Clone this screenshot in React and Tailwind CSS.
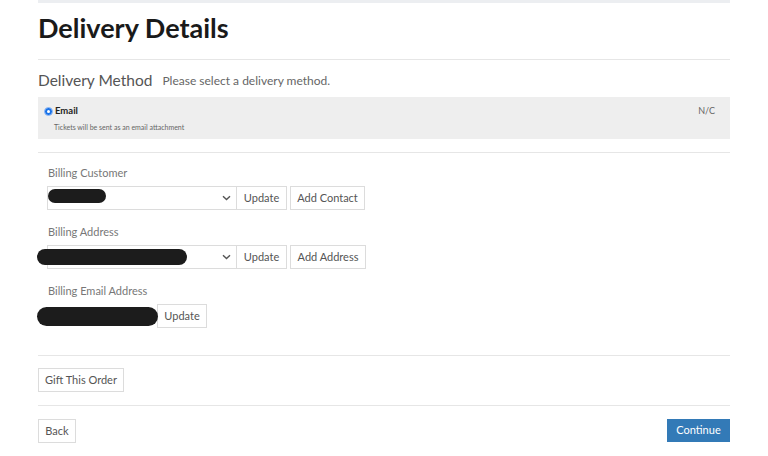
import React from "react";

const btn = "h-[24px] border border-[#dcdcdc] bg-white text-[11px] text-[#555] whitespace-nowrap flex items-center justify-center";

function Blob({ className }) {
	// redaction mark drawn over the field
	return <div className={"absolute bg-[#1c1c1c] rounded-full " + className}></div>;
}

function Chevron() {
	return (
		<svg width="9" height="6" viewBox="0 0 9 6" className="text-[#555]">
			<path d="M1 1.2 L4.5 4.6 L8 1.2" fill="none" stroke="currentColor" strokeWidth="1.4" />
		</svg>
	);
}

const App = () => {
	return (
		<div className="w-[768px] h-[456px] bg-white font-['Lato',sans-serif] overflow-hidden">
			<div className="ml-[38px] w-[692px]">
				<div className="h-[3px] bg-[#eceef1]"></div>

				<div className="h-[56px] pt-[8px]">
					<div className="text-[27px] leading-[34px] font-bold text-[#1a1a1a]">Delivery Details</div>
				</div>

				<div className="border-t border-[#e6e6e6]"></div>

				<div className="h-[37px] flex items-center pt-[4px] gap-[10px]">
					<span className="text-[15.5px] text-[#555]">Delivery Method</span>
					<span className="text-[12px] text-[#666] pt-[1px]">Please select a delivery method.</span>
				</div>

				<div className="h-[42px] bg-[#eeeeee] flex justify-between pl-[6px] pr-[15px] pt-[8px]">
					<div>
						<div className="flex items-center gap-[2px] h-[12px]">
							<div className="w-[9px] h-[9px] rounded-full bg-[#1a73e8] border border-[#9cc0f5] flex items-center justify-center">
								<div className="w-[3px] h-[3px] rounded-full bg-white"></div>
							</div>
							<span className="text-[9.5px] font-bold text-[#222]">Email</span>
						</div>
						<div className="text-[7px] text-[#666] pl-[10px] mt-[5px]">Tickets will be sent as an email attachment</div>
					</div>
					<div className="text-[9px] text-[#666] h-[12px] flex items-center">N/C</div>
				</div>

				<div className="h-[13px]"></div>
				<div className="border-t border-[#e6e6e6]"></div>

				<div className="pl-[9px] pt-[13px]">
					<div className="text-[11px] leading-[14px] text-[#777] pl-[1px]">Billing Customer</div>
					<div className="flex mt-[6px] gap-[3px]">
						<div className="flex">
							<div className="relative w-[190px] h-[24px] border border-[#dcdcdc] bg-white flex items-center justify-end pr-[5px]">
								<Blob className="left-[0px] top-[2px] w-[58px] h-[14px]" />
								<Chevron />
							</div>
							<div className={btn + " w-[50px] border-l-0"}>Update</div>
						</div>
						<div className={btn + " w-[75px]"}>Add Contact</div>
					</div>

					<div className="text-[11px] leading-[14px] text-[#777] pl-[1px] mt-[15px]">Billing Address</div>
					<div className="flex mt-[6px] gap-[3px]">
						<div className="flex">
							<div className="relative w-[190px] h-[24px] border border-[#dcdcdc] bg-white flex items-center justify-end pr-[5px]">
								<Blob className="left-[-11px] top-[3px] w-[150px] h-[16px]" />
								<Chevron />
							</div>
							<div className={btn + " w-[50px] border-l-0"}>Update</div>
						</div>
						<div className={btn + " w-[76px]"}>Add Address</div>
					</div>

					<div className="text-[11px] leading-[14px] text-[#777] pl-[1px] mt-[15px]">Billing Email Address</div>
					<div className="flex mt-[6px]">
						<div className="relative w-[110px] h-[24px]">
							<Blob className="left-[-10px] top-[3px] w-[121px] h-[19px]" />
						</div>
						<div className={btn + " w-[50px]"}>Update</div>
					</div>
				</div>

				<div className="h-[27px]"></div>
				<div className="border-t border-[#e6e6e6]"></div>

				<div className="pt-[12px] pb-[13px]">
					<div className={btn + " w-[86px]"}>Gift This Order</div>
				</div>

				<div className="border-t border-[#e6e6e6]"></div>

				<div className="pt-[13px] flex justify-between">
					<div className={btn + " w-[38px] h-[23px]"}>Back</div>
					<div className="h-[23px] w-[63px] bg-[#337ab7] text-white text-[11px] flex items-center justify-center">Continue</div>
				</div>
			</div>
		</div>
	);
};

export default App;
